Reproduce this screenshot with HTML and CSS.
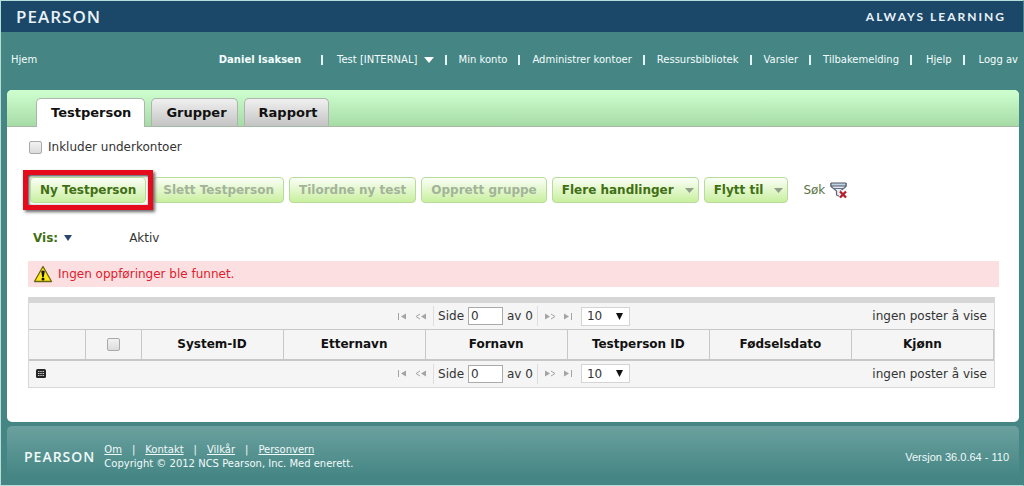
FILE: index.html
```
<!DOCTYPE html>
<html lang="no">
<head>
<meta charset="utf-8">
<title>Testperson</title>
<link rel="stylesheet" href="styles.css">
</head>
<body>
<header class="brandbar">
  <span class="wordmark">PEARSON</span>
  <span class="slogan">ALWAYS LEARNING</span>
</header>
<nav class="topnav">
  <a class="home" href="#">Hjem</a>
  <ul class="nav-links">
    <li class="user">Daniel Isaksen</li>
    <li class="account"><a href="#">Test [INTERNAL] <svg width="10" height="6" viewBox="0 0 10 6"><path d="M0 0h10L5 6z" fill="#fff"/></svg></a></li>
    <li><a href="#">Min konto</a></li>
    <li><a href="#">Administrer kontoer</a></li>
    <li><a href="#">Ressursbibliotek</a></li>
    <li><a href="#">Varsler</a></li>
    <li><a href="#">Tilbakemelding</a></li>
    <li class="wide"><a href="#">Hjelp</a></li>
    <li class="wide"><a href="#">Logg av</a></li>
  </ul>
</nav>
<main class="panel">
  <nav class="tabs">
    <a class="tab active" href="#">Testperson</a>
    <a class="tab" href="#">Grupper</a>
    <a class="tab" href="#">Rapport</a>
  </nav>
  <div class="content">
    <label class="include"><input class="check" type="checkbox">Inkluder underkontoer</label>
    <div class="toolbar">
      <span class="highlight"><button class="btn" type="button">Ny Testperson</button></span>
      <button class="btn" type="button" disabled>Slett Testperson</button>
      <button class="btn" type="button" disabled>Tilordne ny test</button>
      <button class="btn" type="button" disabled>Opprett gruppe</button>
      <button class="btn menu" type="button">Flere handlinger<svg width="9" height="5" viewBox="0 0 9 5"><path d="M0 0h9L4.500 5z" fill="#8f9f89"/></svg></button>
      <button class="btn menu" type="button">Flytt til<svg width="9" height="5" viewBox="0 0 9 5"><path d="M0 0h9L4.500 5z" fill="#8f9f89"/></svg></button>
      <a class="search" href="#">Søk
        <svg width="17" height="17" viewBox="0 0 17 17">
          <path d="M1 1.500h15v3L10.500 9v6L6.500 13V9L1 4.500z" fill="#e9edf2" stroke="#596577" stroke-width="1.200"/>
          <path d="M1 1h15v3H1z" fill="#c3d3e6" stroke="#4c5666"/>
          <path d="M3 6.500h11" stroke="#667184"/>
          <path d="M10 9.500l6 6M16 9.500l-6 6" stroke="#fff" stroke-width="4"/>
          <path d="M10 9.500l6 6M16 9.500l-6 6" stroke="#b51f2b" stroke-width="2.400"/>
        </svg></a>
    </div>
    <div class="filter">
      <button class="view" type="button">Vis: <svg width="8" height="6" viewBox="0 0 8 6"><path d="M0 0h8L4 6z" fill="#27476f"/></svg></button>
      <span>Aktiv</span>
    </div>
    <div class="alert" role="alert">
      <svg width="20" height="18" viewBox="0 0 20 18">
        <path d="M10 1.500L18.500 16.500h-17z" fill="#ffe916" stroke="#6b6515" stroke-width="1.300" stroke-linejoin="round"/>
        <path d="M8.300 6.300q1.700-1.500 3.400 0L10.800 12H9.200z" fill="#111"/><circle cx="10" cy="14" r="1.500" fill="#111"/>
      </svg>
      Ingen oppføringer ble funnet.
    </div>
    <section class="grid">
      <div class="pager">
        <span></span>
        <div class="pager-controls">
          <button class="page-btn" type="button" aria-label="Første"><svg width="11" height="7" viewBox="0 0 11 7"><path d="M1.500 0v7" stroke="#a4a4a4"/><path d="M9 .5v6L4 3.500z" fill="#a4a4a4"/></svg></button>
          <button class="page-btn" type="button" aria-label="Forrige"><svg width="11" height="7" viewBox="0 0 11 7"><path d="M5 1L1 3.500 5 6" fill="none" stroke="#a4a4a4"/><path d="M11 .5v6L6 3.500z" fill="#a4a4a4"/></svg></button>
          <label class="page-field">Side <input type="text" value="0"> av 0</label>
          <button class="page-btn" type="button" aria-label="Neste"><svg width="11" height="7" viewBox="0 0 11 7"><path d="M0 .5v6l5-3z" fill="#a4a4a4"/><path d="M6 1l4 2.500L6 6" fill="none" stroke="#a4a4a4"/></svg></button>
          <button class="page-btn" type="button" aria-label="Siste"><svg width="11" height="7" viewBox="0 0 11 7"><path d="M1 .5v6l5-3z" fill="#a4a4a4"/><path d="M8.500 0v7" stroke="#a4a4a4"/></svg></button>
          <span class="size"><select aria-label="Antall per side"><option>10</option></select><svg width="7" height="7" viewBox="0 0 7 7"><path d="M0 0h7L3.500 7z" fill="#111"/></svg></span>
        </div>
        <span class="count">ingen poster å vise</span>
      </div>
      <table class="people">
        <colgroup><col class="narrow"><col class="narrow"><col><col><col><col><col><col></colgroup>
        <thead><tr>
          <th></th>
          <th><input class="check" type="checkbox" aria-label="Velg alle"></th>
          <th>System-ID</th><th>Etternavn</th><th>Fornavn</th><th>Testperson ID</th><th>Fødselsdato</th><th>Kjønn</th>
        </tr></thead>
      </table>
      <div class="pager">
        <button class="columns" type="button" aria-label="Kolonner"><svg width="10" height="9" viewBox="0 0 10 9"><rect width="10" height="9" rx="1.500" fill="#262626"/><path d="M2 2.500h6M2 4.500h6M2 6.500h6" stroke="#c9c9c9" stroke-dasharray="1.500 .75"/></svg></button>
        <div class="pager-controls">
          <button class="page-btn" type="button" aria-label="Første"><svg width="11" height="7" viewBox="0 0 11 7"><path d="M1.500 0v7" stroke="#a4a4a4"/><path d="M9 .5v6L4 3.500z" fill="#a4a4a4"/></svg></button>
          <button class="page-btn" type="button" aria-label="Forrige"><svg width="11" height="7" viewBox="0 0 11 7"><path d="M5 1L1 3.500 5 6" fill="none" stroke="#a4a4a4"/><path d="M11 .5v6L6 3.500z" fill="#a4a4a4"/></svg></button>
          <label class="page-field">Side <input type="text" value="0"> av 0</label>
          <button class="page-btn" type="button" aria-label="Neste"><svg width="11" height="7" viewBox="0 0 11 7"><path d="M0 .5v6l5-3z" fill="#a4a4a4"/><path d="M6 1l4 2.500L6 6" fill="none" stroke="#a4a4a4"/></svg></button>
          <button class="page-btn" type="button" aria-label="Siste"><svg width="11" height="7" viewBox="0 0 11 7"><path d="M1 .5v6l5-3z" fill="#a4a4a4"/><path d="M8.500 0v7" stroke="#a4a4a4"/></svg></button>
          <span class="size"><select aria-label="Antall per side"><option>10</option></select><svg width="7" height="7" viewBox="0 0 7 7"><path d="M0 0h7L3.500 7z" fill="#111"/></svg></span>
        </div>
        <span class="count">ingen poster å vise</span>
      </div>
    </section>
  </div>
</main>
<footer class="footer">
  <span class="wordmark small">PEARSON</span>
  <div class="legal">
    <ul class="legal-links">
      <li><a href="#">Om</a></li><li><a href="#">Kontakt</a></li><li><a href="#">Vilkår</a></li><li><a href="#">Personvern</a></li>
    </ul>
    <span>Copyright © 2012 NCS Pearson, Inc. Med enerett.</span>
  </div>
  <span class="version">Versjon 36.0.64 - 110</span>
</footer>
</body>
</html>
```
FILE: styles.css
```
* { box-sizing: border-box; }
body {
  margin: 0;
  border: 1px solid #b5dedb;
  border-right-color: #458684;
  background: #458684;
  color: #333;
  font: 12px/16px "DejaVu Sans", Verdana, sans-serif;
}
a { color: inherit; text-decoration: none; }
ul { display: flex; margin: 0; padding: 0; list-style: none; }
button, input, select { font: inherit; color: inherit; margin: 0; }
button { border: 0; padding: 0; background: none; }
svg { flex: none; }

.brandbar {
  display: flex;
  align-items: center;
  justify-content: space-between;
  height: 31px;
  padding: 0 17px 0 15px;
  background: #1b4769;
  color: #e8f2f8;
}
.wordmark { font: 600 17px/24px "Open Sans", sans-serif; letter-spacing: 1px; }
.slogan { font: 700 12px/16px Lato, sans-serif; letter-spacing: 2px; }

.topnav {
  display: flex;
  align-items: center;
  justify-content: space-between;
  height: 55px;
  margin-bottom: 3px;
  padding: 0 5px 0 10px;
  color: #f4fdfd;
  font-size: 10px;
}
.nav-links li { display: flex; align-items: center; white-space: nowrap; }
.nav-links li + li::before {
  content: "";
  width: 2px;
  height: 10px;
  margin: 0 12px 0 11px;
  background: #e4f3f3;
}
.nav-links .account::before { margin: 0 14px 0 20px; }
.nav-links .wide::before { margin-right: 14px; }
.account svg { margin-left: 3px; }
.user { font-weight: 700; }

.panel {
  margin: 0 4px 4px 6px;
  border-radius: 5px;
  background: #fff;
  overflow: hidden;
}
.tabs {
  display: flex;
  align-items: flex-end;
  gap: 6px;
  height: 37px;
  padding-left: 29px;
  border-bottom: 1px solid #a4b8a4;
  background: linear-gradient(#cfffcf, #a6dba6);
}
.tab {
  height: 28px;
  padding: 0 10px 0 14px;
  border: 1px solid #aeb4ae;
  border-bottom: 0;
  border-radius: 5px 5px 0 0;
  background: linear-gradient(#f0f0f0, #c4c4c4);
  color: #111;
  font-size: 13px;
  font-weight: 700;
  line-height: 28px;
}
.tab.active { height: 29px; margin-bottom: -1px; padding-right: 13px; background: #fff; }

.content { padding: 12px 20px 34px 21px; }
.include { display: flex; align-items: center; gap: 6px; padding-left: 1px; }
.check {
  appearance: none;
  width: 13px;
  height: 13px;
  border: 1px solid #aaa;
  border-radius: 2px;
  background: linear-gradient(#f2f2f2, #dcdcdc);
}
.toolbar { display: flex; align-items: center; gap: 5px; margin: 15px 0 20px -5px; }
.highlight {
  display: flex;
  padding: 2px;
  border: 5px solid #e50b1c;
  box-shadow: 2px 2px 3px #666, inset 1px 1px 3px #333;
  z-index: 1;
}
.highlight + .btn { margin-left: -5px; }
.btn {
  height: 26px;
  padding: 0 9px;
  border: 1px solid #b5dc98;
  border-radius: 4px;
  background: linear-gradient(#fbfff7, #c9ef9f);
  color: #416f14;
  font-size: 12px;
  font-weight: 700;
  white-space: nowrap;
}
.btn:disabled { color: #a3b39a; }
.menu { display: flex; align-items: center; gap: 11px; padding-right: 4px; }
.search { display: flex; align-items: center; gap: 5px; margin-left: 10px; color: #5c7448; }
.filter { display: flex; gap: 57px; padding-left: 5px; }
.view { display: flex; align-items: center; gap: 6px; color: #416f14; font-weight: 700; }
.alert {
  display: flex;
  align-items: center;
  gap: 5px;
  height: 26px;
  margin-top: 15px;
  padding-left: 5px;
  background: #fbdfe1;
  color: #e01b2e;
}

.grid {
  margin: 10px 4px 0 0;
  border: 1px solid #d8d8d8;
  border-top: 6px solid #d6d6d6;
  background: #f5f5f5;
}
.pager {
  display: grid;
  grid-template-columns: 1fr auto 1fr;
  align-items: center;
  height: 26px;
  padding: 0 7px;
}
.pager-controls { display: flex; align-items: center; gap: 7px; padding-left: 4px; }
.page-btn, .columns, .view { cursor: pointer; }
.page-btn, .columns { display: flex; }
.page-field {
  display: flex;
  align-items: center;
  gap: 4px;
  height: 20px;
  padding: 0 4px;
  border: solid #ddd;
  border-width: 0 1px;
}
.page-field input {
  width: 35px;
  height: 18px;
  padding: 0 2px;
  border: 1px solid #aaa;
  background: #fff;
}
.size { position: relative; display: flex; }
.size select {
  appearance: none;
  width: 49px;
  height: 19px;
  padding: 0 5px;
  border: 1px solid #d4d4d4;
  border-radius: 0;
  background: #fff;
}
.size svg { position: absolute; right: 7px; top: 6px; pointer-events: none; }
.count { justify-self: end; }
.people {
  width: 100%;
  table-layout: fixed;
  border-collapse: collapse;
  color: #111;
  font-size: 12px;
}
.people th {
  height: 30px;
  padding: 0;
  border: 1px solid #c8c8c8;
  border-bottom: 2px solid #c8c8c8;
  border-left: 0;
  vertical-align: middle;
}
.people .check { display: block; margin: 0 auto; }
.narrow { width: 56px; }

.footer {
  display: flex;
  align-items: center;
  gap: 9px;
  height: 59px;
  margin: 0 4px 0 6px;
  padding: 3px 10px 0 17px;
  border-radius: 5px 5px 0 0;
  background: linear-gradient(#6ba19f, #458684 85%);
  color: #f1fafa;
  font-size: 10px;
  line-height: 14px;
}
.small { font-size: 14px; }
.legal-links a { text-decoration: underline; }
.legal-links li + li::before { content: "|"; margin: 0 10px; }
.version { margin-left: auto; font: 11px/14px "Liberation Sans", Arial, sans-serif; }
```
